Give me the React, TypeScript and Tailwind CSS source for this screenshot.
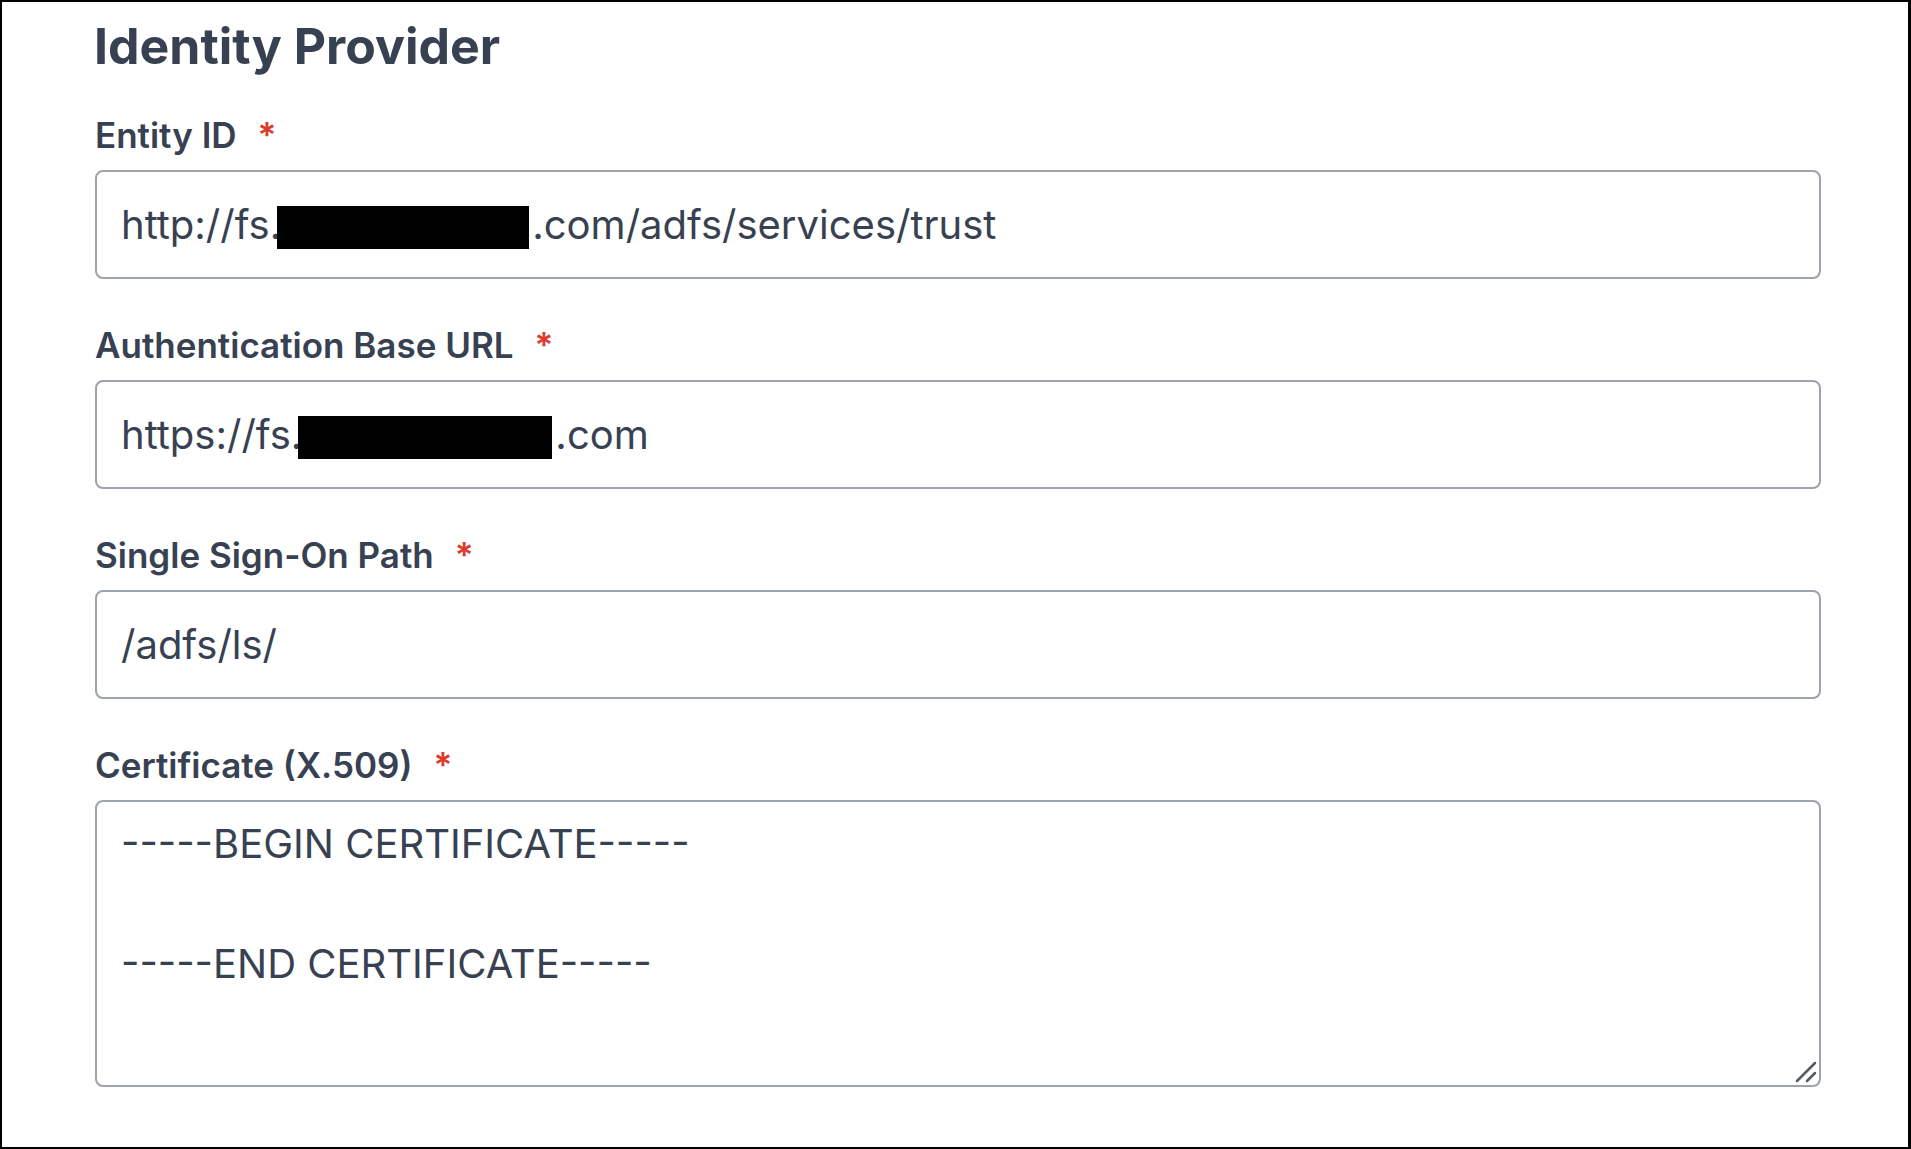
import React from "react";

const fieldText = "text-[40px] leading-[60px] text-[#374151]";
const boxClass =
  "w-full rounded-[8px] border-2 border-[#9ca3af] bg-white px-[24px] whitespace-nowrap";

function Label({ text }: { text: string }) {
  return (
    <div className="flex h-[40px] items-center text-[35px] font-semibold leading-[40px] text-[#374151]">
      <span>{text}</span>
      <span className="ml-[21px] text-[#dc3a2c]">*</span>
    </div>
  );
}

function Redacted({ w }: { w: number }) {
  // black box drawn over part of the hostname
  return (
    <span
      className="-ml-[4px] mr-[3px] inline-block h-[43px] bg-black align-[-10px]"
      style={{ width: w }}
    />
  );
}

export default function App() {
  return (
    <div className="h-[1149px] w-[1911px] overflow-hidden border-t-2 border-b-2 border-l-2 border-r-[3px] border-black bg-white font-['Inter','Noto_Sans',sans-serif]">
      <div className="pl-[93px] pr-[87px] pt-[14px]">
        {/* --- HEADER --- */}
        <h1 className="-ml-[1px] h-[60px] text-[50px] font-bold leading-[60px] text-[#374151]">
          Identity Provider
        </h1>

        <div className="mt-[39px] flex flex-col gap-[46px]">
          {/* Entity ID */}
          <div className="flex flex-col gap-[15px]">
            <Label text="Entity ID" />
            <div className={`${boxClass} ${fieldText} h-[109px] pt-[23px]`}>
              http://fs.<Redacted w={252} />.com/adfs/services/trust
            </div>
          </div>

          {/* Base URL */}
          <div className="flex flex-col gap-[15px]">
            <Label text="Authentication Base URL" />
            <div className={`${boxClass} ${fieldText} h-[109px] pt-[23px]`}>
              https://fs.<Redacted w={254} />.com
            </div>
          </div>

          {/* SSO path */}
          <div className="flex flex-col gap-[15px]">
            <Label text="Single Sign-On Path" />
            <div className={`${boxClass} ${fieldText} h-[109px] pt-[23px]`}>
              /adfs/ls/
            </div>
          </div>

          {/* Certificate */}
          <div className="flex flex-col gap-[15px]">
            <Label text="Certificate (X.509)" />
            <div className="relative">
              <textarea
                readOnly
                className={`${boxClass} ${fieldText} block h-[287px] resize-none pt-[12px] outline-none`}
                defaultValue={"-----BEGIN CERTIFICATE-----\n\n-----END CERTIFICATE-----"}
              />
              <svg
                className="pointer-events-none absolute bottom-[4px] right-[4px]"
                width="22"
                height="22"
                viewBox="0 0 22 22"
              >
                <path d="M2 20 L20 2" stroke="#555b63" strokeWidth="2.5" strokeLinecap="round" />
                <path d="M12 20 L20 12" stroke="#555b63" strokeWidth="2.5" strokeLinecap="round" />
              </svg>
            </div>
          </div>
        </div>
      </div>
    </div>
  );
}
